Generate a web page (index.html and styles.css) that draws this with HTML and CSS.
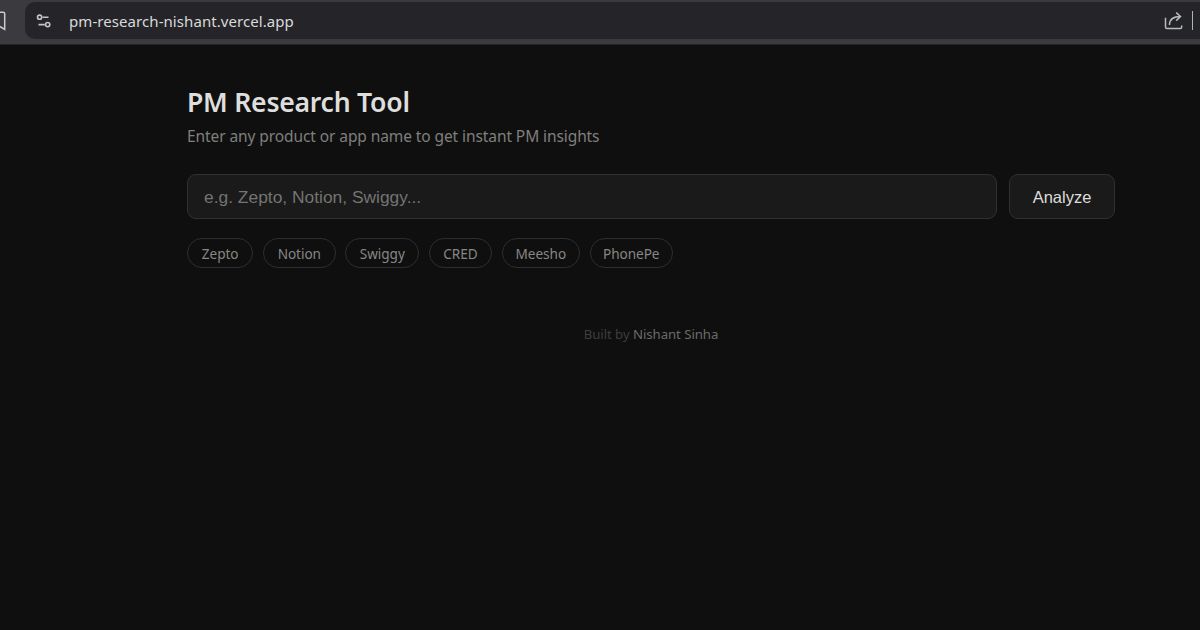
FILE: index.html
```html
<!DOCTYPE html>
<html lang="en">
<head>
<meta charset="utf-8">
<title>PM Research Tool</title>
<link rel="stylesheet" href="styles.css">
</head>
<body>
<header class="browser">
  <svg class="bookmark" width="7" height="24" viewBox="0 0 7 24"><path d="M0 3.2H3.2Q4.7 3.2 4.7 4.7V20.5L0 17.5" fill="none" stroke="#ccc" stroke-width="1.5"/></svg>
  <div class="address">
    <svg class="tune" width="16" height="16" viewBox="0 0 16 16" fill="none" stroke="#c4c6c6" stroke-width="1.6"><circle cx="3.6" cy="4.2" r="2.1"/><path d="M6.6 4.2H12.5M2.5 11.6H8.8"/><circle cx="11.7" cy="11.6" r="2.1"/></svg>
    <span class="url">pm-research-nishant.vercel.app</span>
    <svg class="share" width="20" height="20" viewBox="0 0 20 20" fill="none" stroke="#b9bcbc" stroke-width="1.5"><path d="M1.5 6.8V16Q1.5 17.5 3 17.5H16.2Q17.7 17.5 17.7 16V14.5M5.5 14C5.5 8.8 9 5.5 16.5 5.5M12.2 1.6L16.5 5.5L12.2 9.6"/></svg>
    <span class="divider"></span>
  </div>
</header>
<main class="page">
  <h1 class="title">PM Research Tool</h1>
  <p class="subtitle">Enter any product or app name to get instant PM insights</p>
  <form class="search">
    <input class="query" type="text" placeholder="e.g. Zepto, Notion, Swiggy...">
    <button class="analyze" type="button">Analyze</button>
  </form>
  <div class="chips">
    <span class="chip zepto">Zepto</span>
    <span class="chip notion">Notion</span>
    <span class="chip swiggy">Swiggy</span>
    <span class="chip cred">CRED</span>
    <span class="chip meesho">Meesho</span>
    <span class="chip phonepe">PhonePe</span>
  </div>
  <footer class="credit">Built by <span class="author">Nishant Sinha</span></footer>
</main>
</body>
</html>
```
FILE: styles.css
```css
* { box-sizing: border-box; }
body {
  margin: 0;
  height: 630px;
  overflow: hidden;
  background: #0f0f0f;
  font-family: "Noto Sans", "Open Sans", sans-serif;
}
.browser {
  height: 45px;
  padding: 2px 0 5px;
  display: flex;
  gap: 18px;
  background: #3a3a3f;
  border-bottom: 1px solid #242427;
}
.bookmark { margin-top: 7px; flex: none; }
.address {
  flex: 1;
  display: flex;
  align-items: center;
  background: #252429;
  border-radius: 10px 0 0 10px;
  padding: 0 7px 0 11px;
}
.url {
  margin-left: 17px;
  flex: 1;
  font-size: 15px;
  letter-spacing: 0.07px;
  color: #d9dada;
}
.share { margin-right: 8px; }
.divider { width: 1px; height: 19px; background: #a9b6bb; }
.page { padding: 41px 85px 0 187px; }
.title {
  margin: 0;
  height: 36px;
  line-height: 33px;
  font-size: 26.6px;
  font-weight: 600;
  letter-spacing: -0.25px;
  color: #dededc;
  white-space: nowrap;
}
.subtitle {
  margin: 2px 0 0;
  height: 24px;
  line-height: 24px;
  font-size: 15.5px;
  letter-spacing: -0.09px;
  color: #7f7f7d;
  white-space: nowrap;
}
.search {
  display: flex;
  gap: 12px;
  margin-top: 26px;
  height: 45px;
}
.query, .analyze {
  border: 1px solid #303030;
  border-radius: 9px;
  background: #1a1a1a;
  font-family: "Liberation Sans", Arial, sans-serif;
}
.query {
  flex: 1;
  min-width: 0;
  padding: 1px 16px 0;
  font-size: 17.4px;
  color: #ddd;
}
.query::placeholder { color: #747472; opacity: 1; }
.analyze { width: 106px; padding: 1px 0 0; font-size: 16.5px; color: #deddda; }
.chips { display: flex; gap: 9.4px; margin-top: 19px; }
.chip {
  height: 30px;
  line-height: 30px;
  border: 1px solid #2e2e2e;
  border-radius: 15px;
  text-align: center;
  font-size: 13.6px;
  letter-spacing: -0.05px;
  color: #878784;
}
.zepto { width: 66.4px; }
.notion { width: 73px; }
.swiggy { width: 74.2px; }
.cred { width: 63.4px; }
.meesho { width: 78.6px; }
.phonepe { width: 83.4px; }
.credit {
  margin-top: 56px;
  line-height: 20px;
  text-align: center;
  font-size: 13.2px;
  letter-spacing: -0.05px;
  color: #3d3d40;
}
.author { color: #6b6b6a; }
```
